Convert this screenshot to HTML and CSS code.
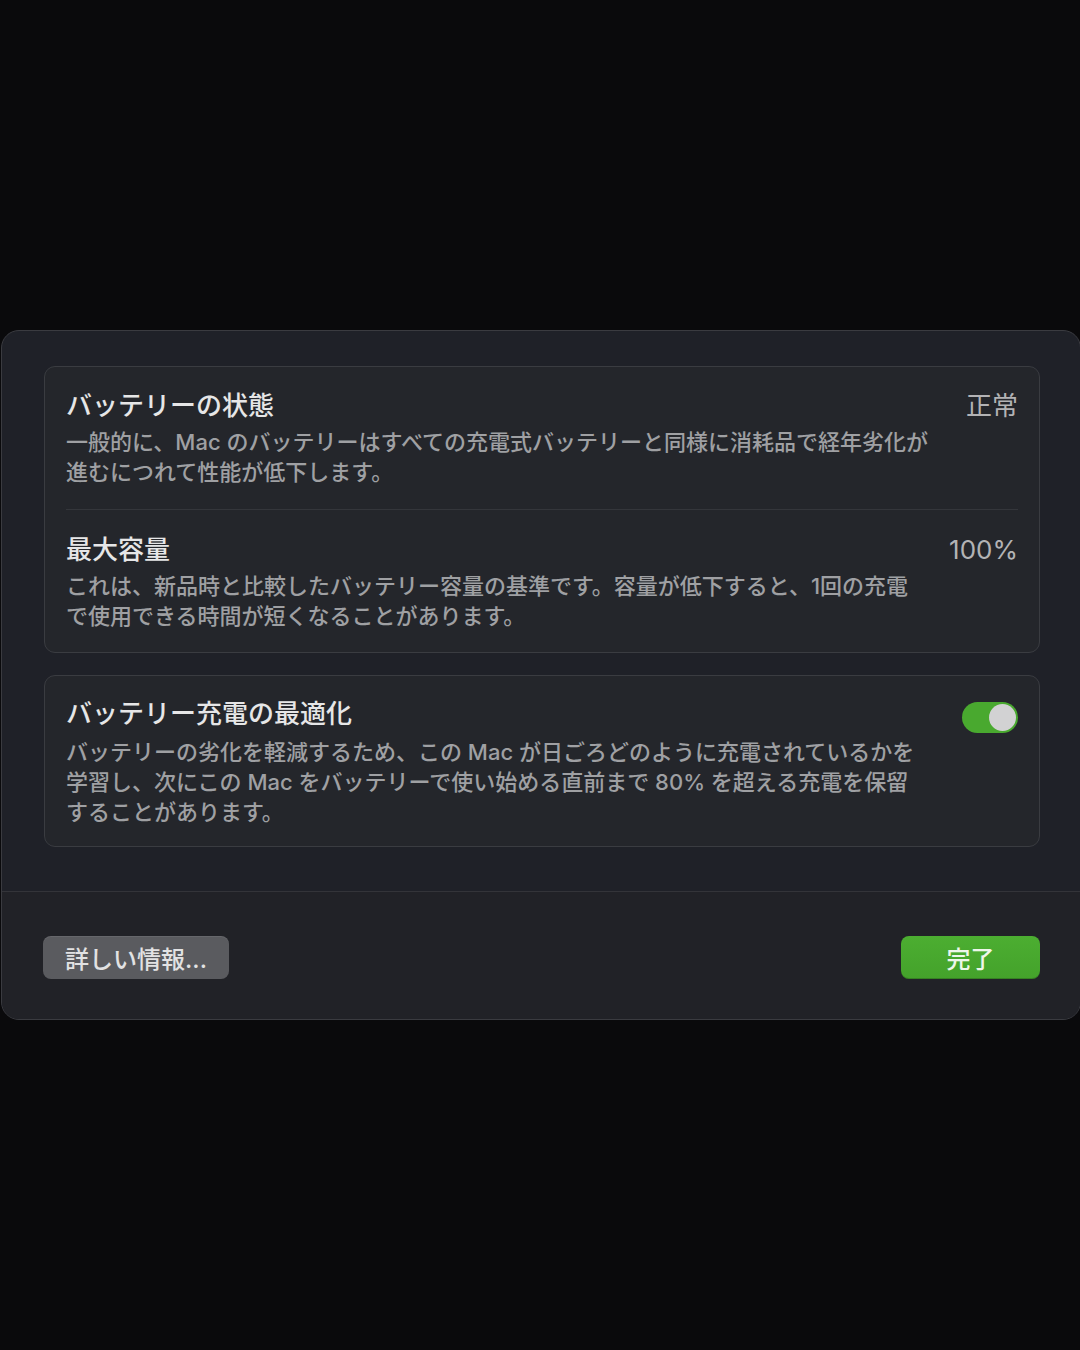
FILE: index.html
```html
<!DOCTYPE html>
<html lang="ja">
<head>
<meta charset="utf-8">
<link rel="stylesheet" href="styles.css">
</head>
<body>
<div class="panel">
  <div class="content">
    <div class="card">
      <div class="row first">
        <div class="row-head">
          <div class="title">バッテリーの状態</div>
          <div class="value">正常</div>
        </div>
        <div class="desc">一般的に、Mac のバッテリーはすべての充電式バッテリーと同様に消耗品で経年劣化が<br>進むにつれて性能が低下します。</div>
      </div>
      <div class="sep"></div>
      <div class="row second">
        <div class="row-head">
          <div class="title">最大容量</div>
          <div class="value">100%</div>
        </div>
        <div class="desc">これは、新品時と比較したバッテリー容量の基準です。容量が低下すると、1回の充電<br>で使用できる時間が短くなることがあります。</div>
      </div>
    </div>
    <div class="card card2">
      <div class="row">
        <div class="row-head">
          <div class="title">バッテリー充電の最適化</div>
          <div class="toggle"><div class="knob"></div></div>
        </div>
        <div class="desc">バッテリーの劣化を軽減するため、この Mac が日ごろどのように充電されているかを<br>学習し、次にこの Mac をバッテリーで使い始める直前まで 80% を超える充電を保留<br>することがあります。</div>
      </div>
    </div>
  </div>
  <div class="footer">
    <button class="btn btn-gray">詳しい情報...</button>
    <button class="btn btn-green">完了</button>
  </div>
</div>
</body>
</html>
```
FILE: styles.css
```css
html, body {
  margin: 0;
  padding: 0;
  background: #0a0a0c;
  overflow: hidden;
  width: 1080px;
  height: 1350px;
}
body {
  font-family: "Inter", "Noto Sans CJK JP", "Noto Sans", sans-serif;
  padding-top: 330px;
  box-sizing: border-box;
}
.panel {
  margin-left: 1px;
  width: 1080px;
  box-sizing: border-box;
  height: 690px;
  border: 1px solid #3a3b40;
  border-radius: 18px;
  background: #1f2128;
  overflow: hidden;
}
.content {
  padding: 35px 40px 44px 42px;
  display: flex;
  flex-direction: column;
  gap: 22px;
}
.card {
  background: #24262b;
  border: 1px solid #3a3c41;
  border-radius: 11px;
  padding: 0 21px;
}
.row {
  padding: 22px 0 19px;
}
.row.first {
  padding: 23px 0 22px;
}
.row.second {
  padding: 24px 0 21px;
}
.sep {
  height: 1px;
  background: #34363b;
}
.row-head {
  display: flex;
  justify-content: space-between;
  align-items: flex-start;
}
.title {
  font-size: 26px;
  line-height: 32px;
  font-weight: 500;
  color: #e6e6e7;
}
.value {
  font-size: 26px;
  line-height: 32px;
  color: #b3b3b5;
}
.desc {
  margin-top: 5px;
  font-size: 22px;
  line-height: 30px;
  font-weight: 500;
  color: #9fa0a3;
  white-space: nowrap;
}
.card2 .desc {
  margin-top: 4px;
}
.toggle {
  margin-top: 4px;
  width: 56px;
  height: 31px;
  border-radius: 16px;
  background: #49a92f;
  box-sizing: border-box;
  padding: 2px;
  display: flex;
  justify-content: flex-end;
  align-items: center;
}
.knob {
  width: 27px;
  height: 27px;
  border-radius: 50%;
  background: #d2d2d3;
}
.footer {
  border-top: 1px solid #333439;
  background: #212227;
  height: 100%;
  padding: 44px 40px 0 41px;
  display: flex;
  justify-content: space-between;
  align-items: flex-start;
}
.btn {
  font-family: "Inter", "Noto Sans CJK JP", "Noto Sans", sans-serif;
  font-size: 24px;
  font-weight: 500;
  height: 43px;
  border: none;
  border-radius: 8px;
  padding: 0;
  display: flex;
  align-items: center;
  justify-content: center;
}
.btn-gray {
  width: 186px;
  background: #5a5b5f;
  color: #e2e2e3;
  box-shadow: inset 0 1px 0 rgba(255,255,255,0.08);
}
.btn-green {
  width: 139px;
  background: linear-gradient(#4cae31, #44a22b);
  color: #eef6ea;
  box-shadow: inset 0 -1px 0 rgba(0,0,0,0.2);
}
```
